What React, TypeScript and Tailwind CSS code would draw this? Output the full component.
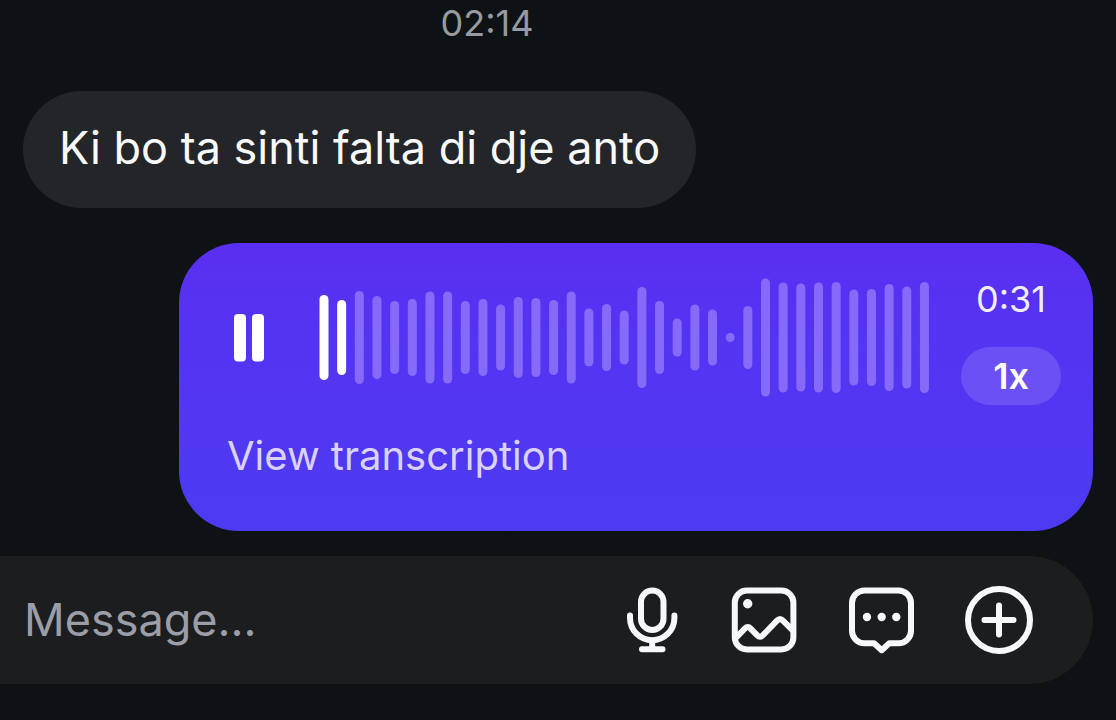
import { useState } from "react";

const BAR_HEIGHTS = [
  85, 75, 93, 83, 73, 77, 92, 92, 73, 77, 66, 81, 79, 75, 92, 58, 67, 54, 101, 73, 38, 66, 56, 9,
  63, 118, 110, 108, 110, 111, 96, 97, 107, 102, 111,
];
const BAR_WIDTH = 9;
const BAR_STEP = 17.66;

function Waveform({ played }: { played: number }) {
  return (
    <svg viewBox="0 0 610 120" className="h-[120px] min-w-0 flex-1" aria-hidden="true">
      {BAR_HEIGHTS.map((height, i) => (
        <rect
          key={i}
          x={0.5 + i * BAR_STEP}
          y={59.5 - height / 2}
          width={BAR_WIDTH}
          height={height}
          rx={BAR_WIDTH / 2}
          fill={i < played ? "#ffffff" : "#866bfb"}
        />
      ))}
    </svg>
  );
}

function VoiceMessage() {
  const [playing, setPlaying] = useState(true);
  const [speed, setSpeed] = useState(1);

  return (
    <div className="ml-[179px] mr-[23px] mt-[35px] rounded-[60px] bg-linear-to-b from-[#592ff2] to-[#4c3bf3] pb-[47px] pl-12 pr-8 pt-7">
      <div className="flex items-center">
        <button
          onClick={() => setPlaying(!playing)}
          aria-label={playing ? "Pause" : "Play"}
          className="mr-12 flex h-14 w-11 shrink-0 items-center justify-center"
        >
          <svg width="32" height="48" viewBox="0 0 32 48" fill="#ffffff">
            {playing ? (
              <>
                <rect x="1" y="0" width="12" height="47.5" rx="4" />
                <rect x="19" y="0" width="12" height="47.5" rx="4" />
              </>
            ) : (
              <path d="M2 4v40l28-20z" />
            )}
          </svg>
        </button>
        <Waveform played={2} />
        <div className="ml-8 flex w-[100px] shrink-0 flex-col items-center gap-5">
          <span className="text-[36px] leading-[56px] text-[#f1edff]">0:31</span>
          <button
            onClick={() => setSpeed(speed === 1 ? 2 : 1)}
            aria-label={`Playback speed ${speed}x`}
            className="h-[58px] w-full rounded-full bg-[#6b51f4] text-[36px] font-semibold leading-[58px] text-white"
          >
            {speed}x
          </button>
        </div>
      </div>
      <button className="mt-[23px] block text-[40px] leading-[56px] text-[#d9d2fd]">
        View transcription
      </button>
    </div>
  );
}

const iconProps = {
  fill: "none",
  stroke: "currentColor",
  strokeWidth: 6,
  strokeLinecap: "round",
  strokeLinejoin: "round",
} as const;

function MicIcon() {
  return (
    <svg width="54" height="68" viewBox="0 0 54 68" {...iconProps}>
      <rect x="15" y="4.5" width="22.5" height="39.5" rx="11.25" />
      <path d="M4 29.5v2.5a22.2 22.2 0 0 0 44.4 0v-2.5M26.2 55v8M16 63.3h20.5" />
    </svg>
  );
}

function ImageIcon() {
  return (
    <svg width="66" height="68" viewBox="0 0 66 68" {...iconProps}>
      <rect x="3.8" y="4.5" width="58.6" height="59" rx="12" />
      <circle cx="16.7" cy="17.8" r="4.7" fill="currentColor" stroke="none" />
      <path d="M5.5 51.2l8.3-8.6q3-3 5.8 0l6.4 6.6q3 3 6 0l14-14.6q3-3 6 0l9 9" />
    </svg>
  );
}

function ChatIcon() {
  return (
    <svg width="66" height="68" viewBox="0 0 66 68" {...iconProps}>
      <path d="M16.5 4.5h34a12.5 12.5 0 0 1 12.5 12.5v27.8a12.5 12.5 0 0 1-12.5 12.5h-9.2l-7.6 6.9-7.6-6.9h-9.6a12.5 12.5 0 0 1-12.5-12.5v-27.8a12.5 12.5 0 0 1 12.5-12.5z" />
      <g fill="currentColor" stroke="none">
        <circle cx="19" cy="31" r="4.2" />
        <circle cx="33.7" cy="31" r="4.2" />
        <circle cx="48.3" cy="31" r="4.2" />
      </g>
    </svg>
  );
}

function PlusIcon() {
  return (
    <svg width="68" height="68" viewBox="0 0 68 68" {...iconProps}>
      <circle cx="34" cy="34" r="31" />
      <path d="M34 19.5v29M19.5 34h29" />
    </svg>
  );
}

function Composer() {
  const [value, setValue] = useState("");

  return (
    <form
      onSubmit={(e) => e.preventDefault()}
      className="mr-[23px] mt-[25px] flex h-32 items-center gap-[51px] rounded-r-full bg-[#1c1d1f] pl-6 pr-[60px] text-[#f7f8fb]"
    >
      <input
        type="text"
        value={value}
        onChange={(e) => setValue(e.target.value)}
        placeholder="Message..."
        aria-label="Message"
        className="h-16 min-w-0 flex-1 bg-transparent text-[45px] outline-none placeholder:text-[#9b9ea6]"
      />
      <button type="button" aria-label="Record voice message">
        <MicIcon />
      </button>
      <button type="button" aria-label="Send photo">
        <ImageIcon />
      </button>
      <button type="button" aria-label="Quick replies">
        <ChatIcon />
      </button>
      <button type="button" aria-label="More">
        <PlusIcon />
      </button>
    </form>
  );
}

export default function App() {
  return (
    <main className="flex min-h-screen flex-col bg-[#0e1214] font-[Inter,sans-serif]">
      <time className="pr-[142px] text-center text-[36px] leading-[46px] text-[#979aa0]">02:14</time>
      <p className="ml-[23px] mt-[45px] w-fit rounded-full bg-[#242529] px-9 pb-[30px] pt-[27px] text-[45px] leading-[60px] text-[#f8f9fb]">
        Ki bo ta sinti falta di dje anto
      </p>
      <VoiceMessage />
      <Composer />
    </main>
  );
}
